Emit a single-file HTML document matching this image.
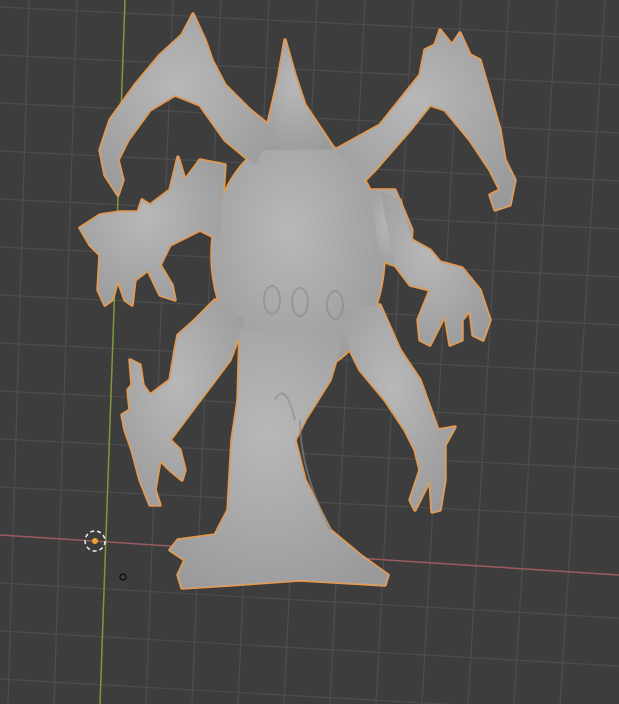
<!DOCTYPE html>
<html><head><meta charset="utf-8"><style>
html,body{margin:0;padding:0;background:#3d3d3d;width:619px;height:704px;overflow:hidden}
svg{display:block}
</style></head><body>
<svg width="619" height="704" viewBox="0 0 619 704" xmlns="http://www.w3.org/2000/svg">
<defs>
<radialGradient id="g" cx="0.45" cy="0.4" r="0.7">
<stop offset="0" stop-color="#b8b8b8"/><stop offset="1" stop-color="#9a9a9a"/>
</radialGradient>
<g id="m">
<ellipse cx="298" cy="255" rx="86" ry="118"/>
<path d="M262,150 L278,80 L285,40 L295,75 L305,105 L335,150 Z"/>
<path d="M370,190 L395,190 L412,230 L408,270 L380,260 Z"/>
<path d="M255,165 L275,130 L250,110 L225,85 L212,60 L205,40 L193,14 L182,35 L160,55 L135,85 L110,120 L100,150 L105,175 L118,195 L123,180 L118,160 L128,140 L150,110 L175,95 L200,105 L225,140 Z"/>
<path d="M225,165 L200,160 L185,180 L178,157 L170,190 L150,205 L142,200 L138,212 L120,212 L100,215 L80,228 L90,245 L100,255 L98,290 L105,305 L112,300 L118,280 L125,300 L132,305 L135,280 L148,270 L160,295 L175,300 L172,285 L160,265 L170,245 L200,230 L220,240 Z"/>
<path d="M335,150 L380,125 L420,75 L425,50 L435,45 L440,30 L452,45 L460,33 L470,55 L480,60 L490,95 L500,130 L505,160 L515,180 L510,205 L495,210 L490,195 L500,190 L490,170 L470,140 L445,110 L430,105 L410,130 L375,170 L365,180 Z"/>
<path d="M380,190 L400,200 L412,240 L430,250 L440,262 L462,268 L480,290 L490,320 L483,340 L473,335 L470,310 L462,320 L462,340 L450,345 L445,315 L430,345 L420,340 L418,320 L430,290 L410,285 L395,265 Z"/>
<path d="M340,310 L380,305 L400,350 L420,380 L438,430 L455,427 L445,445 L445,480 L440,510 L432,512 L430,480 L420,500 L415,510 L410,500 L420,470 L415,450 L405,430 L385,400 L360,370 L350,350 Z"/>
<path d="M215,300 L245,320 L230,360 L200,400 L170,440 L180,450 L185,470 L182,480 L170,470 L160,460 L155,490 L160,505 L150,505 L140,480 L132,450 L125,430 L122,415 L130,410 L128,390 L132,385 L130,360 L140,365 L143,385 L150,395 L170,380 L175,350 L178,335 L195,320 Z"/>
<path d="M240,330 L345,330 L330,380 L305,420 L295,440 L305,480 L330,530 L360,555 L388,575 L385,585 L300,580 L230,585 L182,588 L178,575 L185,560 L170,550 L178,540 L215,535 L228,510 L232,440 L238,400 Z"/>
</g>
</defs>
<rect width="619" height="704" fill="#3d3d3d"/>
<g stroke="#4d4d4d" stroke-width="1.2">
<line x1="29" y1="0" x2="8" y2="704"/>
<line x1="77" y1="0" x2="54" y2="704"/>
<line x1="173" y1="0" x2="146" y2="704"/>
<line x1="221" y1="0" x2="192" y2="704"/>
<line x1="269" y1="0" x2="238" y2="704"/>
<line x1="317" y1="0" x2="284" y2="704"/>
<line x1="365" y1="0" x2="330" y2="704"/>
<line x1="413" y1="0" x2="376" y2="704"/>
<line x1="461" y1="0" x2="422" y2="704"/>
<line x1="509" y1="0" x2="468" y2="704"/>
<line x1="557" y1="0" x2="514" y2="704"/>
<line x1="605" y1="0" x2="560" y2="704"/>
<line x1="0" y1="7" x2="619" y2="37"/>
<line x1="0" y1="55" x2="619" y2="85"/>
<line x1="0" y1="103" x2="619" y2="133"/>
<line x1="0" y1="151" x2="619" y2="181"/>
<line x1="0" y1="199" x2="619" y2="229"/>
<line x1="0" y1="247" x2="619" y2="277"/>
<line x1="0" y1="295" x2="619" y2="325"/>
<line x1="0" y1="343" x2="619" y2="373"/>
<line x1="0" y1="391" x2="619" y2="421"/>
<line x1="0" y1="439" x2="619" y2="469"/>
<line x1="0" y1="487" x2="619" y2="517"/>
<line x1="0" y1="583" x2="619" y2="618"/>
<line x1="0" y1="631" x2="619" y2="666"/>
<line x1="0" y1="679" x2="619" y2="714"/>
</g>
<line x1="0" y1="535" x2="619" y2="575" stroke="#9a5a62" stroke-width="1.5"/>
<line x1="125" y1="0" x2="100" y2="704" stroke="#7a9a3e" stroke-width="1.5"/>
<use href="#m" fill="#e8984a" stroke="#e8984a" stroke-width="3.5" stroke-linejoin="round"/>
<use href="#m" fill="url(#g)" stroke="#a8a8a8" stroke-width="0.5"/>
<g fill="none" stroke="#8a8a8a" stroke-width="2" opacity="0.6">
<ellipse cx="272" cy="300" rx="8" ry="14"/><ellipse cx="300" cy="302" rx="8" ry="14"/><ellipse cx="335" cy="305" rx="8" ry="14"/>
<path d="M275,400 Q285,380 295,420 M300,420 Q300,470 330,530"/>
</g>
<circle cx="95" cy="541" r="10" fill="none" stroke="#eee" stroke-width="1.5" stroke-dasharray="4 3"/>
<circle cx="95" cy="541" r="3" fill="#f0a030"/>
<circle cx="123" cy="577" r="3" fill="none" stroke="#111" stroke-width="1.5"/>
</svg>
</body></html>
